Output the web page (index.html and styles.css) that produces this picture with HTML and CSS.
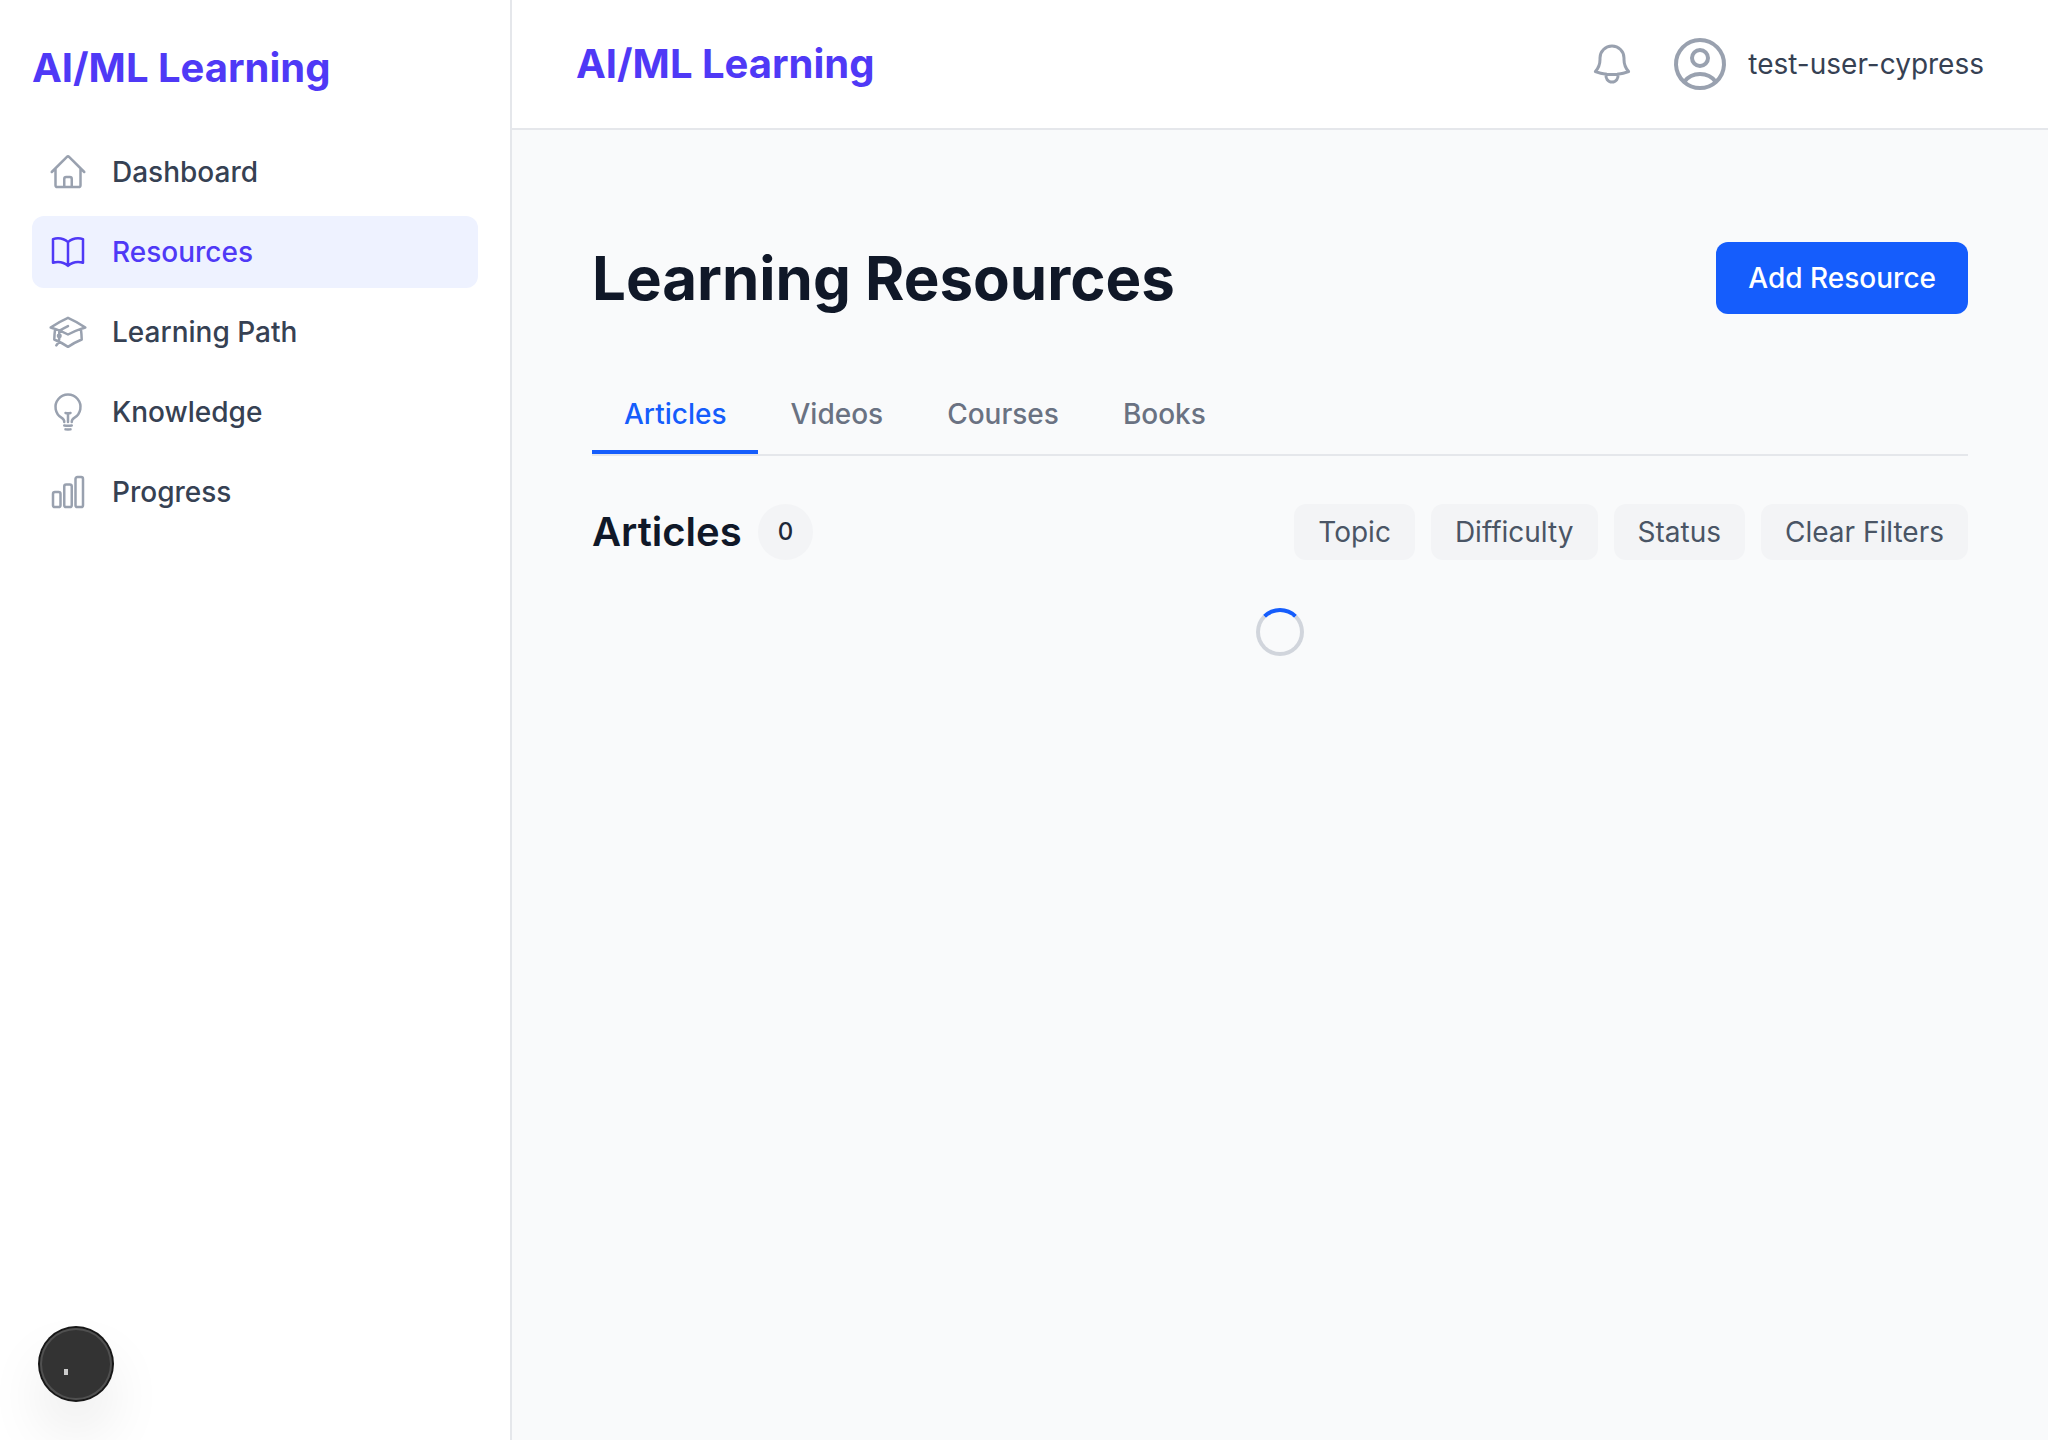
FILE: index.html
```html
<!DOCTYPE html>
<html lang="en">
<head>
<meta charset="utf-8">
<title>AI/ML Learning</title>
<link rel="stylesheet" href="styles.css">
</head>
<body>
<div class="app">
  <aside class="sidebar">
    <div class="sidebar-brand">AI/ML Learning</div>
    <nav class="nav">
      <a class="nav-item"><svg class="icon" viewBox="0 0 24 24"><path d="m2.25 12 8.954-8.955c.44-.439 1.152-.439 1.591 0L21.75 12M4.5 9.75v10.125c0 .621.504 1.125 1.125 1.125H9.75v-4.875c0-.621.504-1.125 1.125-1.125h2.25c.621 0 1.125.504 1.125 1.125V21h4.125c.621 0 1.125-.504 1.125-1.125V9.75M8.25 21h8.25"/></svg>Dashboard</a>
      <a class="nav-item active"><svg class="icon" viewBox="0 0 24 24"><path d="M12 6.042A8.967 8.967 0 0 0 6 3.75c-1.052 0-2.062.18-3 .512v14.25A8.987 8.987 0 0 1 6 18c2.305 0 4.408.867 6 2.292m0-14.25a8.966 8.966 0 0 1 6-2.292c1.052 0 2.062.18 3 .512v14.25A8.987 8.987 0 0 0 18 18a8.967 8.967 0 0 0-6 2.292m0-14.25v14.25"/></svg>Resources</a>
      <a class="nav-item"><svg class="icon" viewBox="0 0 24 24"><path d="M4.26 10.147a60.438 60.438 0 0 0-.491 6.347A48.62 48.62 0 0 1 12 20.904a48.62 48.62 0 0 1 8.232-4.41 60.46 60.46 0 0 0-.491-6.347m-15.482 0a50.636 50.636 0 0 0-2.658-.813A59.906 59.906 0 0 1 12 3.493a59.903 59.903 0 0 1 10.399 5.84c-.896.248-1.783.52-2.658.814m-15.482 0A50.717 50.717 0 0 1 12 13.489a50.702 50.702 0 0 1 7.74-3.342M6.75 15a.75.75 0 1 0 0-1.5.75.75 0 0 0 0 1.5Zm0 0v-3.675A55.378 55.378 0 0 1 12 8.443m-7.007 11.55A5.981 5.981 0 0 0 6.75 15.75v-1.5"/></svg>Learning Path</a>
      <a class="nav-item"><svg class="icon" viewBox="0 0 24 24"><path d="M12 18v-5.25m0 0a6.01 6.01 0 0 0 1.5-.189m-1.5.189a6.01 6.01 0 0 1-1.5-.189m3.75 7.478a12.06 12.06 0 0 1-4.5 0m3.75 2.383a14.406 14.406 0 0 1-3 0M14.25 18v-.192c0-.983.658-1.823 1.508-2.316a7.5 7.5 0 1 0-7.517 0c.85.493 1.509 1.333 1.509 2.316V18"/></svg>Knowledge</a>
      <a class="nav-item"><svg class="icon" viewBox="0 0 24 24"><path d="M3 13.125C3 12.504 3.504 12 4.125 12h2.25c.621 0 1.125.504 1.125 1.125v6.75C7.5 20.496 6.996 21 6.375 21h-2.25A1.125 1.125 0 0 1 3 19.875v-6.75ZM9.75 8.625c0-.621.504-1.125 1.125-1.125h2.25c.621 0 1.125.504 1.125 1.125v11.25c0 .621-.504 1.125-1.125 1.125h-2.25a1.125 1.125 0 0 1-1.125-1.125V8.625ZM16.5 4.125c0-.621.504-1.125 1.125-1.125h2.25C20.496 3 21 3.504 21 4.125v15.75c0 .621-.504 1.125-1.125 1.125h-2.25a1.125 1.125 0 0 1-1.125-1.125V4.125Z"/></svg>Progress</a>
    </nav>
  </aside>
  <div class="content">
    <header class="topbar">
      <div class="brand">AI/ML Learning</div>
      <div class="account">
        <svg class="icon bell" viewBox="0 0 24 24"><path d="M14.857 17.082a23.848 23.848 0 0 0 5.454-1.31A8.967 8.967 0 0 1 18 9.75V9A6 6 0 0 0 6 9v.75a8.967 8.967 0 0 1-2.312 6.022c1.733.64 3.56 1.085 5.455 1.31m5.714 0a24.255 24.255 0 0 1-5.714 0m5.714 0a3 3 0 1 1-5.714 0"/></svg>
        <div class="user">
          <svg class="icon avatar" viewBox="0 0 24 24"><path d="M17.982 18.725A7.488 7.488 0 0 0 12 15.75a7.488 7.488 0 0 0-5.982 2.975m11.963 0a9 9 0 1 0-11.963 0m11.963 0A8.966 8.966 0 0 1 12 21a8.966 8.966 0 0 1-5.982-2.275M15 9.75a3 3 0 1 1-6 0 3 3 0 0 1 6 0Z"/></svg>
          <span>test-user-cypress</span>
        </div>
      </div>
    </header>
    <main class="main">
      <div class="page-head">
        <h1>Learning Resources</h1>
        <button class="add">Add Resource</button>
      </div>
      <div class="tabs">
        <button class="tab selected">Articles</button>
        <button class="tab">Videos</button>
        <button class="tab">Courses</button>
        <button class="tab">Books</button>
      </div>
      <div class="list-head">
        <div class="list-title"><h2>Articles</h2><span class="count">0</span></div>
        <div class="filters">
          <button class="chip">Topic</button>
          <button class="chip">Difficulty</button>
          <button class="chip">Status</button>
          <button class="chip">Clear Filters</button>
        </div>
      </div>
      <div class="spinner"></div>
    </main>
  </div>
</div>
<div class="dev-badge"><span class="dev-dot"></span></div>
</body>
</html>
```
FILE: styles.css
```css
* { box-sizing: border-box; margin: 0; padding: 0; }
body { font-family: Inter, sans-serif; font-size: 28px; line-height: 40px; color: #101828; background: #f9fafb; overflow: hidden; }
button { font: inherit; border: 0; background: none; color: inherit; }
.app { display: flex; height: 1440px; }
.sidebar { width: 512px; flex: none; background: #fff; border-right: 2px solid #e5e7eb; padding: 40px 32px; }
.sidebar-brand, .brand { font-size: 40px; line-height: 56px; font-weight: 700; color: #4f39f6; }
.nav { display: flex; flex-direction: column; gap: 8px; margin-top: 40px; }
.nav-item { display: flex; align-items: center; gap: 24px; height: 72px; padding: 0 16px; border-radius: 12px; font-weight: 500; color: #364153; }
.nav-item.active { background: #eef2ff; color: #4f39f6; }
.icon { width: 40px; height: 40px; flex: none; fill: none; stroke: #99a1af; stroke-width: 1.5; stroke-linecap: round; stroke-linejoin: round; }
.active .icon { stroke: #4f39f6; }
.content { flex: 1; display: flex; flex-direction: column; background: #f9fafb; }
.topbar { height: 130px; flex: none; display: flex; align-items: center; justify-content: space-between; background: #fff; border-bottom: 2px solid #e5e7eb; padding: 0 64px; }
.account { display: flex; align-items: center; gap: 32px; color: #364153; }
.icon.bell { width: 48px; height: 48px; }
.user { display: flex; align-items: center; gap: 16px; }
.icon.avatar { width: 64px; height: 64px; }
.main { padding: 112px 80px; }
.page-head { display: flex; align-items: center; justify-content: space-between; height: 72px; }
h1 { font-size: 60px; line-height: 72px; font-weight: 700; }
.add { height: 72px; padding: 0 32px; border-radius: 12px; background: #155dfc; color: #fff; font-weight: 500; }
.tabs { display: flex; margin-top: 64px; border-bottom: 2px solid #e5e7eb; }
.tab { padding: 16px 32px; border-bottom: 4px solid transparent; font-weight: 500; color: #6a7282; }
.tab.selected { color: #155dfc; border-bottom-color: #155dfc; }
.list-head { display: flex; align-items: center; justify-content: space-between; margin-top: 48px; }
.list-title { display: flex; align-items: center; gap: 16px; }
h2 { font-size: 40px; line-height: 56px; font-weight: 600; }
.count { height: 56px; padding: 0 20px; border-radius: 28px; background: #f3f4f6; color: #1e2939; font-size: 24px; line-height: 56px; font-weight: 500; }
.filters { display: flex; gap: 16px; }
.chip { height: 56px; padding: 0 24px; border-radius: 12px; background: #f3f4f6; color: #4a5565; }
.spinner { width: 48px; height: 48px; margin: 48px auto 0; border: 4px solid #d1d5dc; border-top-color: #155dfc; border-radius: 50%; }
.dev-badge { position: absolute; left: 40px; top: 1328px; width: 72px; height: 72px; border-radius: 50%; background: #333; box-shadow: 0 0 0 2px #171717, inset 0 0 0 2px #505050, 0 32px 64px -8px rgba(0,0,0,.14); }
.dev-dot { position: absolute; left: 24px; top: 41px; width: 4px; height: 6px; background: #ccc; }
```
